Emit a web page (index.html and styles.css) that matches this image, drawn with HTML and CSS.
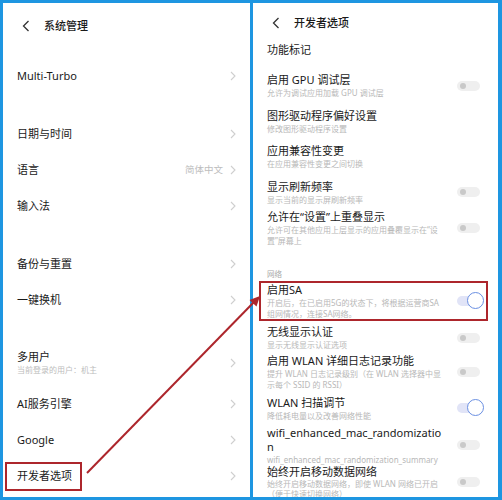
FILE: index.html
```html
<!DOCTYPE html>
<html lang="zh-CN">
<head>
<meta charset="utf-8">
<title>开发者选项</title>
<link rel="stylesheet" href="styles.css">
</head>
<body>
<div class="frame">
  <section class="panel">
    <header class="bar">
      <svg class="back" width="8" height="12" viewBox="0 0 8 12"><polyline points="6.5,1 1.5,6 6.5,11" fill="none" stroke="#333" stroke-width="1.3"/></svg>
      <span>系统管理</span>
    </header>
    <div class="item"><span class="label">Multi-Turbo</span><svg class="chev" width="6" height="10" viewBox="0 0 6 10"><polyline points="1,1 5,5 1,9" fill="none" stroke="#cfcfcf" stroke-width="1.1"/></svg></div>
    <div class="gap"></div>
    <div class="item"><span class="label">日期与时间</span><svg class="chev" width="6" height="10" viewBox="0 0 6 10"><polyline points="1,1 5,5 1,9" fill="none" stroke="#cfcfcf" stroke-width="1.1"/></svg></div>
    <div class="item"><span class="label">语言</span><span class="val">简体中文</span><svg class="chev" width="6" height="10" viewBox="0 0 6 10"><polyline points="1,1 5,5 1,9" fill="none" stroke="#cfcfcf" stroke-width="1.1"/></svg></div>
    <div class="item"><span class="label">输入法</span><svg class="chev" width="6" height="10" viewBox="0 0 6 10"><polyline points="1,1 5,5 1,9" fill="none" stroke="#cfcfcf" stroke-width="1.1"/></svg></div>
    <div class="gap"></div>
    <div class="item"><span class="label">备份与重置</span><svg class="chev" width="6" height="10" viewBox="0 0 6 10"><polyline points="1,1 5,5 1,9" fill="none" stroke="#cfcfcf" stroke-width="1.1"/></svg></div>
    <div class="item"><span class="label">一键换机</span><svg class="chev" width="6" height="10" viewBox="0 0 6 10"><polyline points="1,1 5,5 1,9" fill="none" stroke="#cfcfcf" stroke-width="1.1"/></svg></div>
    <div class="gap"></div>
    <div class="item tall"><span class="label"><span class="lt">多用户</span><span class="ls">当前登录的用户：机主</span></span><svg class="chev" width="6" height="10" viewBox="0 0 6 10"><polyline points="1,1 5,5 1,9" fill="none" stroke="#cfcfcf" stroke-width="1.1"/></svg></div>
    <div class="item"><span class="label">AI服务引擎</span><svg class="chev" width="6" height="10" viewBox="0 0 6 10"><polyline points="1,1 5,5 1,9" fill="none" stroke="#cfcfcf" stroke-width="1.1"/></svg></div>
    <div class="item"><span class="label">Google</span><svg class="chev" width="6" height="10" viewBox="0 0 6 10"><polyline points="1,1 5,5 1,9" fill="none" stroke="#cfcfcf" stroke-width="1.1"/></svg></div>
    <div class="item"><span class="label"><span class="hl">开发者选项</span></span><svg class="chev" width="6" height="10" viewBox="0 0 6 10"><polyline points="1,1 5,5 1,9" fill="none" stroke="#cfcfcf" stroke-width="1.1"/></svg></div>
  </section>

  <section class="panel">
    <header class="bar dev">
      <svg class="back" width="8" height="12" viewBox="0 0 8 12"><polyline points="6.5,1 1.5,6 6.5,11" fill="none" stroke="#333" stroke-width="1.3"/></svg>
      <span>开发者选项</span>
    </header>
    <div class="opt cat"><div class="txt"><div class="t">功能标记</div></div></div>
    <div class="opt"><div class="txt"><div class="t">启用 GPU 调试层</div><div class="s">允许为调试应用加载 GPU 调试层</div></div><span class="tg"></span></div>
    <div class="opt"><div class="txt"><div class="t">图形驱动程序偏好设置</div><div class="s">修改图形驱动程序设置</div></div></div>
    <div class="opt"><div class="txt"><div class="t">应用兼容性变更</div><div class="s">在应用兼容性变更之间切换</div></div></div>
    <div class="opt pb1"><div class="txt"><div class="t">显示刷新频率</div><div class="s">显示当前的显示屏刷新频率</div></div><span class="tg"></span></div>
    <div class="opt"><div class="txt"><div class="t">允许在“设置”上重叠显示</div><div class="s">允许可在其他应用上层显示的应用叠覆显示在“设<br>置”屏幕上</div></div><span class="tg"></span></div>
    <div class="group">网络</div>
    <div class="opt boxed"><div class="txt"><div class="t">启用SA</div><div class="s">开启后，在已启用5G的状态下，将根据运营商SA<br>组网情况，连接SA网络。</div></div><span class="tg on"></span></div>
    <div class="opt pb1"><div class="txt"><div class="t">无线显示认证</div><div class="s">显示无线显示认证选项</div></div><span class="tg"></span></div>
    <div class="opt pt2 pb2"><div class="txt"><div class="t">启用 WLAN 详细日志记录功能</div><div class="s">提升 WLAN 日志记录级别（在 WLAN 选择器中显<br>示每个 SSID 的 RSSI）</div></div><span class="tg"></span></div>
    <div class="opt pb3"><div class="txt"><div class="t">WLAN 扫描调节</div><div class="s">降低耗电量以及改善网络性能</div></div><span class="tg on"></span></div>
    <div class="opt pt2 pb0"><div class="txt"><div class="t">wifi_enhanced_mac_randomizatio<br>n</div><div class="s">wifi_enhanced_mac_randomization_summary</div></div><span class="tg"></span></div>
    <div class="opt last"><div class="txt"><div class="t">始终开启移动数据网络</div><div class="s">始终开启移动数据网络，即使 WLAN 网络已开启<br>（便于快速切换网络）</div></div><span class="tg"></span></div>
  </section>

  <svg class="arrow" width="502" height="500" viewBox="0 0 502 500">
    <line x1="87" y1="473" x2="255" y2="301" stroke="#ad262c" stroke-width="2"/>
    <polygon points="260,296 256.5,306.5 249.5,300" fill="#ad262c"/>
  </svg>
</div>
</body>
</html>
```

FILE: styles.css
```css
html, body {
  margin: 0;
  padding: 0;
}
body {
  width: 502px;
  height: 500px;
  overflow: hidden;
  font-family: "Noto Sans", "Noto Sans CJK SC", sans-serif;
  color: #1a1a1a;
}
.frame {
  position: relative;
  display: grid;
  grid-template-columns: 247px 245px;
  column-gap: 3px;
  padding: 3px 4px 3px 3px;
  height: 500px;
  box-sizing: border-box;
  background: #1e96e1;
}
.panel {
  background: #fff;
  overflow: hidden;
  min-height: 0;
}
.bar {
  display: flex;
  align-items: center;
  padding: 16px 0 25px 19px;
  line-height: 14px;
  font-size: 11px;
  font-weight: 500;
  color: #1a1a1a;
}
.bar.dev {
  padding: 13px 0 9px 19px;
}
.back {
  margin-right: 14px;
  flex: none;
}

/* left list */
.item {
  display: flex;
  align-items: center;
  height: 36px;
  padding: 0 14px;
  font-size: 11px;
  line-height: 14px;
  color: #1a1a1a;
}
.item.tall {
  height: 46px;
}
.label {
  flex: 1;
  min-width: 0;
}
.lt {
  display: block;
}
.ls {
  display: block;
  font-size: 8px;
  line-height: 12px;
  color: #bdbdbd;
}
.val {
  font-size: 9.5px;
  color: #bdbdbd;
  margin-right: 7px;
}
.chev {
  flex: none;
}
.gap {
  height: 22px;
}
.hl {
  display: inline-block;
  border: 2px solid #ad262c;
  padding: 5.5px 8px 5.5px 10px;
  margin-left: -12px;
}

/* right list */
.opt {
  display: flex;
  align-items: center;
  padding: 4px 18px 6.5px 14px;
}
.opt.cat {
  padding-bottom: 12px;
}
.opt.pt2 { padding-top: 2px; }
.opt.pb0 { padding-bottom: 0; }
.opt.pb1 { padding-bottom: 1.5px; }
.opt.pb2 { padding-bottom: 2px; }
.opt.pb3 { padding-bottom: 3px; }
.opt.last {
  padding-top: 0;
  padding-bottom: 0;
}
.opt.last .s {
  line-height: 10px;
}
.txt {
  flex: 1;
  min-width: 0;
}
.t {
  font-size: 11px;
  line-height: 14px;
  color: #1a1a1a;
}
.s {
  font-size: 8px;
  line-height: 11px;
  color: #b8b8b8;
  white-space: nowrap;
}
.group {
  padding: 16.5px 0 0 14px;
  font-size: 7.5px;
  line-height: 10px;
  color: #a8a8a8;
}
.opt.boxed {
  margin: 2px 10px 0 6px;
  border: 2px solid #ad262c;
  padding: 0 6px 0 6px;
}
.tg {
  position: relative;
  flex: none;
  width: 23px;
  height: 10px;
  border-radius: 5px;
  background: #efefef;
}
.tg::before {
  content: "";
  position: absolute;
  left: 3px;
  top: 2px;
  width: 6px;
  height: 6px;
  border-radius: 50%;
  background: #c9c9c9;
}
.tg.on {
  background: #e1e4f7;
}
.tg.on::before {
  left: auto;
  right: -4px;
  top: -4px;
  width: 15px;
  height: 15px;
  border: 1.5px solid #6a8fe2;
  background: #fff;
}
.arrow {
  position: absolute;
  left: 0;
  top: 0;
  pointer-events: none;
}
```
